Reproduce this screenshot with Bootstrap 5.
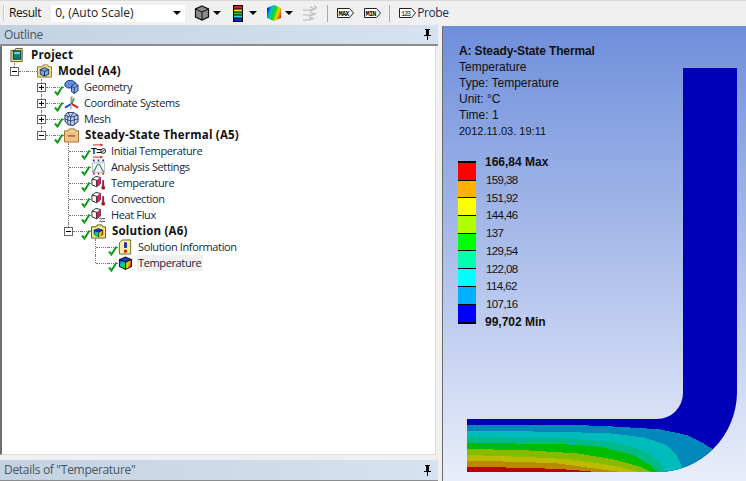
<!DOCTYPE html>
<html lang="en">
<head>
    <meta charset="UTF-8">
    <title>Steady-State Thermal - Outline</title>
    <link href="https://cdn.jsdelivr.net/npm/bootstrap@5.3.0/dist/css/bootstrap.min.css" rel="stylesheet">
    <style>
        html, body { height: 100%; overflow: hidden; }
        body { background: #f0f0f0; font-family: "Open Sans", "Noto Sans", sans-serif; font-size: 11px; color: #10202f; line-height: 16px; }
        .app { width: 746px; height: 481px; }

        /* toolbar */
        .tbar { height: 25px; padding-left: 3px; border-top: 1px solid #d8d8d8; }
        .grip { width: 2px; height: 17px; background: #c8c8c8; border-right: 1px solid #fff; margin-right: 4px; flex: none; }
        .tb-label { font-size: 12px; color: #111; letter-spacing: -.4px; }
        .scale-select { width: 134px; height: 17px; margin-left: 10px; background: #fff; padding-left: 4px; font-size: 12px; color: #222; flex: none; }
        .caret { width: 0; height: 0; flex: none; border-left: 4px solid transparent; border-right: 4px solid transparent; border-top: 4px solid #000; }
        .tb-sep { width: 1px; height: 17px; background: #a8a8a8; flex: none; }
        .ml-3px { margin-left: 3px; }
        .ml-6px { margin-left: 6px; }
        .ml-8px { margin-left: 8px; }
        .ml-9px { margin-left: 9px; }
        .ml-10px { margin-left: 10px; }
        .ml-12px { margin-left: 12px; }
        .ml-1px { margin-left: 1px; }

        /* panes */
        .left-pane { width: 438px; }
        .pane-head { height: 21px; padding: 0 6px 0 4px; background: linear-gradient(90deg, #c3d2e2, #d6e2ef); color: #4a5560; font-size: 12px; letter-spacing: -.3px; border-bottom: 2px solid #8d8d8d; }
        .pane-head.foot { height: 21px; border-bottom: 1px solid #8d8d8d; }
        .tree { width: 436px; height: 409px; margin-bottom: 5px; padding-top: 1px; background: #fff; border-left: 2px solid #6e6e6e; border-right: 1px solid #dcdcdc; border-bottom: 1px solid #dcdcdc; }
        .splitter { width: 4px; }
        .viewport { flex: 1; margin-top: 1px; border-left: 1px solid #6a6a6a; background: linear-gradient(#6f8edb, #e9eefa); }

        /* tree rows */
        .trow { height: 16px; margin-left: -2px; white-space: nowrap; color: #14283c; letter-spacing: -.37px; }
        .cell { width: 27px; height: 16px; flex: none; position: relative; }
        .cell.tee::before, .cell.ell::before, .cell.box::before { content: ""; position: absolute; left: 14px; border-left: 1px dotted #777; }
        .cell.tee::before { top: 0; height: 16px; }
        .cell.ell::before { top: 0; height: 8px; }
        .cell.box.top::before, .cell.box.last::before { top: 0; height: 4px; }
        .cell.box.both::before { top: 0; height: 16px; }
        .cell.tee::after, .cell.ell::after, .cell.box::after { content: ""; position: absolute; top: 8px; border-top: 1px dotted #777; }
        .cell.tee::after, .cell.ell::after { left: 15px; width: 12px; }
        .cell.box::after { left: 19px; width: 8px; }
        .pm { position: absolute; left: 10px; top: 4px; width: 9px; height: 9px; background: #fff; border: 1px solid #666; z-index: 1; }
        .pm::before { content: ""; position: absolute; left: 1px; top: 3px; width: 5px; height: 1px; background: #000; }
        .pm.plus::after { content: ""; position: absolute; left: 3px; top: 1px; width: 1px; height: 5px; background: #000; }
        .slot { width: 10px; height: 16px; flex: none; position: relative; }
        .slot::before { content: ""; position: absolute; left: 0; top: 8px; width: 10px; border-top: 1px dotted #777; }
        .slot svg { position: absolute; left: 0; top: 5px; z-index: 1; }
        .ticon { flex: none; display: block; }
        .tname { margin-left: 5px; }
        .tname.strong { margin-left: 6px; font-weight: 700; color: #111; font-size: 11.5px; letter-spacing: .2px; }
        .tname.sel { background: #f0f0f0; margin-left: 4px; padding: 0 2px 0 1px; }
        .proj { padding-left: 10px; }

        /* result viewport */
        .vp-inner { position: relative; height: 100%; padding: 17px 0 0 16px; color: #111; font-family: "Liberation Sans", Arial, sans-serif; font-size: 12px; }
        .vp-inner p { margin: 0; height: 16px; line-height: 16px; white-space: nowrap; }
        .vp-inner p.vp-title { letter-spacing: -.13px; }
        .vp-inner p.vp-date { font-size: 11px; }
        .legend { margin-top: 22px; margin-left: -1px; }
        .bar { width: 18px; flex: none; border-top: 2px solid #000; border-bottom: 2px solid #000; }
        .bar i { display: block; height: 17.7px; border-bottom: 1px solid #000; }
        .bar i:last-child { border-bottom: 0; }
        .vals { height: 176px; margin-left: 9px; margin-top: -7px; font-size: 11.5px; letter-spacing: -.6px; }
        .vals span { display: block; height: 16px; line-height: 16px; padding-left: 1px; }
        .vals span.fw-bold { font-size: 12px; letter-spacing: 0; padding-left: 0; }
        .model { position: absolute; left: 0; top: 0; }
        .spr { position: absolute; width: 0; height: 0; }
    </style>
</head>
<body>

<svg class="spr">
    <defs>
        <linearGradient id="rb" x1="0" y1=".3" x2="1" y2=".7">
            <stop offset="0" stop-color="#0020e0"/><stop offset=".25" stop-color="#00c0e0"/><stop offset=".5" stop-color="#10d020"/><stop offset=".75" stop-color="#e8d800"/><stop offset="1" stop-color="#e02010"/>
        </linearGradient>
        <linearGradient id="fl" x1="0" y1="0" x2=".6" y2="1">
            <stop offset="0" stop-color="#0030e0"/><stop offset=".5" stop-color="#00c8c8"/><stop offset="1" stop-color="#20d020"/>
        </linearGradient>
        <linearGradient id="fr" x1="0" y1="0" x2="1" y2=".4">
            <stop offset="0" stop-color="#30d020"/><stop offset=".5" stop-color="#e8d800"/><stop offset="1" stop-color="#e83010"/>
        </linearGradient>
        <symbol id="chk" viewBox="0 0 10 12"><path d="M1 7.500l2.500 3L8.500 2.500" fill="none" stroke="#0c9a1c" stroke-width="2"/></symbol>
        <symbol id="i-project" viewBox="0 0 16 16"><path d="M1 3h4l1-2h7v14H1z" fill="#f2e38c" stroke="#5e5428"/><rect x="3.500" y="3.500" width="8" height="9" fill="#0a7f83" stroke="#08343a"/><rect x="4.500" y="5" width="6" height="2" fill="#8adcd0"/></symbol>
        <symbol id="i-model" viewBox="0 0 16 16"><path d="M.5 3.500h5l1-2h5l1 2h3v11H.5z" fill="#f0dc84" stroke="#8a7a38"/><path d="M8 4.500l4.500 2v5L8 13.500l-4.500-2v-5z" fill="#7fa8e0" stroke="#1d3560"/><path d="M3.500 6.500L8 8.500l4.500-2M8 8.500v5" fill="none" stroke="#1d3560"/></symbol>
        <symbol id="i-geo" viewBox="0 0 16 16"><path d="M1 4l3-3h5l3 2v3L9 9H4L1 7z" fill="#5c8fe0" stroke="#1d3a78"/><path d="M8 7l4-3 3 2v6l-4 3-3-2z" fill="#7ea8ea" stroke="#1d3a78"/><path d="M11 9v6M8 7l3 2 4-3" fill="none" stroke="#1d3a78"/></symbol>
        <symbol id="i-coord" viewBox="0 0 16 16"><path d="M8 9V1" stroke="#9a9a9a" stroke-width="2.200"/><path d="M8 9l7 4" stroke="#d02020" stroke-width="2"/><path d="M8 9l-7 4" stroke="#2040e0" stroke-width="2"/><path d="M8 9l3-6" stroke="#20a030" stroke-width="1.500"/><path d="M8 9l-1 6" stroke="#b8b8b8" stroke-width="1.500"/></symbol>
        <symbol id="i-mesh" viewBox="0 0 16 16"><path d="M1 4l3-3h6l5 3v7l-5 4-6-1-3-4z" fill="#b8cff2" stroke="#1e2e60"/><path d="M1 4l6 2 8-2M7 6v9M1 8l6 2 8-2M4 1l3 5M10 1l-3 5M4 5v8M11 5v9" fill="none" stroke="#1e2e60" stroke-width=".8"/></symbol>
        <symbol id="i-steady" viewBox="0 0 16 16"><path d="M.5 3.500h4l1-2h6l1 2h3v12H.5z" fill="#f6cf97" stroke="#9a6a30"/><rect x="1.500" y="5" width="13" height="9.500" fill="#f4bf80"/><path d="M4 9h8" stroke="#7a4a20" stroke-width="1.200"/></symbol>
        <symbol id="i-init" viewBox="0 0 16 16"><path d="M2 1.500h10M2 14.500h10" stroke="#c02020"/><path d="M10 0l3 1.500-3 1.500zM10 13l3 1.500-3 1.500z" fill="#c02020"/><text x="0" y="11.500" font-family="Liberation Sans" font-size="10" font-weight="700" fill="#111">T=</text><circle cx="13" cy="8" r="2.500" fill="none" stroke="#111"/><path d="M11.500 9.500l3-3" stroke="#111"/></symbol>
        <symbol id="i-settings" viewBox="0 0 16 16"><path d="M2 1h12" stroke="#2040d0" stroke-dasharray="2 3" stroke-width="2"/><rect x="1.500" y="3.500" width="13" height="10" fill="#f6f6f6" stroke="#b8b8b8"/><path d="M2 13c3 0 3-8 6-8s3 8 6 8" fill="none" stroke="#2a8a70" stroke-width="1.200"/><path d="M2 15h12" stroke="#c02020" stroke-width="2" stroke-dasharray="2 3"/></symbol>
        <symbol id="i-temp" viewBox="0 0 16 16"><path d="M1 4l4-3 5 1v7l-4 3-5-2z" fill="#fff" stroke="#222"/><path d="M6 5l4-3v7l-4 3z" fill="#e01868"/><path d="M1 4l5 1v7" fill="none" stroke="#222"/><path d="M13 5v7" stroke="#b01020" stroke-width="2"/><circle cx="13" cy="13" r="2" fill="#b01020"/></symbol>
        <symbol id="i-flux" viewBox="0 0 16 16"><path d="M1 4l4-3 5 1v7l-4 3-5-2z" fill="#fff" stroke="#222"/><path d="M6 5l4-3v7l-4 3z" fill="#e01868"/><path d="M1 4l5 1v7" fill="none" stroke="#222"/><path d="M9 12c1.500-2 2 1.500 3 0s1.500 1 3-.5M9 15c1.500-2 2 1.500 3 0s1.500 1 3-.5" fill="none" stroke="#222"/></symbol>
        <symbol id="i-sol" viewBox="0 0 16 16"><path d="M.5 3.500h5l1-2h5l1 2h3v12H.5z" fill="#f2e88c" stroke="#5a5a18"/><path d="M8 5l5 2v5l-5 2.500L3 12V7z" fill="#111"/><path d="M3.500 7.500L8 9.500v4.500l-4.500-2z" fill="url(#fl)"/><path d="M8.500 9.500l4-2V12l-4 2z" fill="url(#fr)"/><path d="M4 7l4-1.500L12 7 8 9z" fill="#1838d0"/></symbol>
        <symbol id="i-info" viewBox="0 0 16 16"><path d="M1.500 3.500l3-3h9v15h-12z" fill="#f8f0a0" stroke="#6a6420"/><path d="M8 3v6" stroke="#1c20d0" stroke-width="3"/><rect x="6.500" y="11" width="3" height="3" fill="#c01818"/></symbol>
        <symbol id="i-result" viewBox="0 0 16 16"><path d="M8 1l7 3v8l-7 3.500L1 12V4z" fill="#111"/><path d="M2 5l5.500 2.500V14L2 11.500z" fill="url(#fl)"/><path d="M8.500 7.500L14 5v6.500L8.500 14z" fill="url(#fr)"/><path d="M2.500 4L8 2l5.500 2L8 6.500z" fill="#1838c8"/></symbol>
    </defs>
</svg>

<div class="app d-flex flex-column">
    <!-- toolbar -->
    <div class="tbar d-flex align-items-center">
        <span class="grip"></span>
        <span class="tb-label">Result</span>
        <div class="scale-select d-flex align-items-center justify-content-between pe-1"><span>0, (Auto Scale)</span><span class="caret"></span></div>
        <svg class="ml-9px" width="16" height="16" viewBox="0 0 16 16"><path d="M8 1l6.500 3v8L8 15l-6.500-3V4z" fill="#8a8a8a" stroke="#111" stroke-width="1.200"/><path d="M1.500 4L8 7l6.500-3M8 7v8" fill="none" stroke="#111"/></svg>
        <span class="caret ml-3px"></span>
        <svg class="ml-12px" width="10" height="17" viewBox="0 0 10 17"><rect width="10" height="17" fill="#000"/><rect x="1" y="1" width="8" height="2.500" fill="#f01010"/><rect x="1" y="4.500" width="8" height="2" fill="#f0e800"/><rect x="1" y="7.500" width="8" height="2" fill="#10d020"/><rect x="1" y="10.500" width="8" height="2" fill="#10e8e0"/><rect x="1" y="13.500" width="8" height="2.500" fill="#1020e0"/></svg>
        <span class="caret ml-6px"></span>
        <svg class="ml-9px" width="16" height="16" viewBox="0 0 16 16"><path d="M8 0l7 3v10l-7 3-7-3V3z" fill="url(#rb)"/></svg>
        <span class="caret ml-3px"></span>
        <svg class="ml-9px" width="16" height="16" viewBox="0 0 16 16"><path d="M1 5h9M1 10h9M1 15h7M8 2l5 2-5 2M8 7l5 2-5 2M7 12l4 1.500-4 1.500M12 1l3 2" fill="none" stroke="#b4b4b4" stroke-width="1.200"/></svg>
        <span class="tb-sep ml-9px"></span>
        <svg class="ml-9px" width="17" height="10" viewBox="0 0 17 10"><path d="M.5.500h12l4 4.500-4 4.500H.5z" fill="#fff" stroke="#222"/><text x="1.500" y="8" font-family="Liberation Mono" font-size="7" font-weight="700" textLength="11" fill="#111">MAX</text></svg>
        <svg class="ml-10px" width="17" height="10" viewBox="0 0 17 10"><path d="M.5.500h12l4 4.500-4 4.500H.5z" fill="#fff" stroke="#222"/><text x="1.500" y="8" font-family="Liberation Mono" font-size="7" font-weight="700" textLength="11" fill="#111">MIN</text></svg>
        <span class="tb-sep ml-8px"></span>
        <svg class="ml-9px" width="17" height="10" viewBox="0 0 17 10"><path d="M.5.500h12l4 4.500-4 4.500H.5z" fill="#fff" stroke="#222"/><text x="2" y="8" font-family="Liberation Mono" font-size="7" textLength="10" fill="#111">123</text></svg>
        <span class="tb-label ml-1px" style="color:#1c2c5c">Probe</span>
    </div>

    <div class="d-flex flex-grow-1">
        <!-- outline -->
        <div class="left-pane d-flex flex-column">
            <div class="pane-head d-flex align-items-center justify-content-between">
                <span>Outline</span>
                <svg width="9" height="11" viewBox="0 0 9 11"><path d="M2 0h5v1H6v5h2v1H5v4H4V7H1V6h2V1H2z" fill="#000"/></svg>
            </div>
            <div class="tree">
                <div class="trow proj d-flex align-items-center"><svg class="ticon" width="15" height="16"><use href="#i-project"/></svg><span class="tname strong">Project</span></div>

                <div class="trow d-flex align-items-center"><div class="cell box top"><span class="pm"></span></div><div class="slot"></div><svg class="ticon" width="15" height="16"><use href="#i-model"/></svg><span class="tname strong">Model (A4)</span></div>

                <div class="trow d-flex align-items-center"><div class="cell"></div><div class="cell box both"><span class="pm plus"></span></div><div class="slot"><svg width="10" height="12"><use href="#chk"/></svg></div><svg class="ticon" width="15" height="16"><use href="#i-geo"/></svg><span class="tname">Geometry</span></div>
                <div class="trow d-flex align-items-center"><div class="cell"></div><div class="cell box both"><span class="pm plus"></span></div><div class="slot"><svg width="10" height="12"><use href="#chk"/></svg></div><svg class="ticon" width="15" height="16"><use href="#i-coord"/></svg><span class="tname">Coordinate Systems</span></div>
                <div class="trow d-flex align-items-center"><div class="cell"></div><div class="cell box both"><span class="pm plus"></span></div><div class="slot"><svg width="10" height="12"><use href="#chk"/></svg></div><svg class="ticon" width="15" height="16"><use href="#i-mesh"/></svg><span class="tname">Mesh</span></div>
                <div class="trow d-flex align-items-center"><div class="cell"></div><div class="cell box last"><span class="pm"></span></div><div class="slot"><svg width="10" height="12"><use href="#chk"/></svg></div><svg class="ticon" width="15" height="16"><use href="#i-steady"/></svg><span class="tname strong">Steady-State Thermal (A5)</span></div>

                <div class="trow d-flex align-items-center"><div class="cell"></div><div class="cell"></div><div class="cell tee"></div><div class="slot"><svg width="10" height="12"><use href="#chk"/></svg></div><svg class="ticon" width="15" height="16"><use href="#i-init"/></svg><span class="tname">Initial Temperature</span></div>
                <div class="trow d-flex align-items-center"><div class="cell"></div><div class="cell"></div><div class="cell tee"></div><div class="slot"><svg width="10" height="12"><use href="#chk"/></svg></div><svg class="ticon" width="15" height="16"><use href="#i-settings"/></svg><span class="tname">Analysis Settings</span></div>
                <div class="trow d-flex align-items-center"><div class="cell"></div><div class="cell"></div><div class="cell tee"></div><div class="slot"><svg width="10" height="12"><use href="#chk"/></svg></div><svg class="ticon" width="15" height="16"><use href="#i-temp"/></svg><span class="tname">Temperature</span></div>
                <div class="trow d-flex align-items-center"><div class="cell"></div><div class="cell"></div><div class="cell tee"></div><div class="slot"><svg width="10" height="12"><use href="#chk"/></svg></div><svg class="ticon" width="15" height="16"><use href="#i-temp"/></svg><span class="tname">Convection</span></div>
                <div class="trow d-flex align-items-center"><div class="cell"></div><div class="cell"></div><div class="cell tee"></div><div class="slot"><svg width="10" height="12"><use href="#chk"/></svg></div><svg class="ticon" width="15" height="16"><use href="#i-flux"/></svg><span class="tname">Heat Flux</span></div>
                <div class="trow d-flex align-items-center"><div class="cell"></div><div class="cell"></div><div class="cell box last"><span class="pm"></span></div><div class="slot"><svg width="10" height="12"><use href="#chk"/></svg></div><svg class="ticon" width="15" height="16"><use href="#i-sol"/></svg><span class="tname strong">Solution (A6)</span></div>

                <div class="trow d-flex align-items-center"><div class="cell"></div><div class="cell"></div><div class="cell"></div><div class="cell tee"></div><div class="slot"><svg width="10" height="12"><use href="#chk"/></svg></div><svg class="ticon" width="15" height="16"><use href="#i-info"/></svg><span class="tname">Solution Information</span></div>
                <div class="trow d-flex align-items-center"><div class="cell"></div><div class="cell"></div><div class="cell"></div><div class="cell ell"></div><div class="slot"><svg width="10" height="12"><use href="#chk"/></svg></div><svg class="ticon" width="15" height="16"><use href="#i-result"/></svg><span class="tname sel">Temperature</span></div>
            </div>
            <div class="pane-head foot d-flex align-items-center justify-content-between">
                <span>Details of "Temperature"</span>
                <svg width="9" height="11" viewBox="0 0 9 11"><path d="M2 0h5v1H6v5h2v1H5v4H4V7H1V6h2V1H2z" fill="#000"/></svg>
            </div>
        </div>
        <div class="splitter"></div>

        <!-- result view -->
        <div class="viewport">
            <div class="vp-inner">
                <svg class="model" width="304" height="455" viewBox="443 26 304 455" shape-rendering="crispEdges">
                    <defs>
                        <clipPath id="part"><path d="M683 68H737V392A80 80 0 0 1 657 472H467V419H657A26 26 0 0 0 683 393Z"/></clipPath>
                    </defs>
                    <g clip-path="url(#part)">
                        <rect x="442" y="26" width="304" height="455" fill="#0000b8"/>
                        <g transform="translate(460 400) scale(.33333)">
                            <path d="M21 75L350 75 470 80 600 88 680 105 730 130 770 155 760 260H21Z" fill="#0088bb"/>
                            <path d="M21 93L280 95 450 100 550 112 620 135 650 165 670 210 660 260H21Z" fill="#00bbbb"/>
                            <path d="M21 111L300 115 450 125 550 150 600 185 620 220V260H21Z" fill="#00bb88"/>
                            <path d="M21 129L300 132 420 140 520 165 570 195 597 220V260H21Z" fill="#00bb00"/>
                            <path d="M21 147L180 150 350 160 470 180 540 200 583 220V260H21Z" fill="#88bb00"/>
                            <path d="M21 165L170 170 320 177 450 195 555 220V260H21Z" fill="#bbbb00"/>
                            <path d="M21 183L165 185 290 190 400 205 510 220V260H21Z" fill="#bb8800"/>
                            <path d="M21 201L175 203 300 207 350 211 435 218V260H21Z" fill="#bb0000"/>
                        </g>
                    </g>
                </svg>
                <div class="position-relative">
                    <p class="vp-title fw-bold">A: Steady-State Thermal</p>
                    <p>Temperature</p>
                    <p>Type: Temperature</p>
                    <p>Unit: °C</p>
                    <p>Time: 1</p>
                    <p class="vp-date">2012.11.03. 19:11</p>
                    <div class="legend d-flex">
                        <div class="bar align-self-start">
                            <i style="background:#ff0000"></i><i style="background:#ffb000"></i><i style="background:#ffff00"></i><i style="background:#b0ff00"></i><i style="background:#00ff00"></i><i style="background:#00ffb0"></i><i style="background:#00ffff"></i><i style="background:#00b0ff"></i><i style="background:#0000ff"></i>
                        </div>
                        <div class="vals d-flex flex-column justify-content-between">
                            <span class="fw-bold">166,84 Max</span>
                            <span>159,38</span><span>151,92</span><span>144,46</span><span>137</span><span>129,54</span><span>122,08</span><span>114,62</span><span>107,16</span>
                            <span class="fw-bold">99,702 Min</span>
                        </div>
                    </div>
                </div>
            </div>
        </div>
    </div>
</div>

<script src="https://cdn.jsdelivr.net/npm/bootstrap@5.3.0/dist/js/bootstrap.bundle.min.js"></script>
</body>
</html>
